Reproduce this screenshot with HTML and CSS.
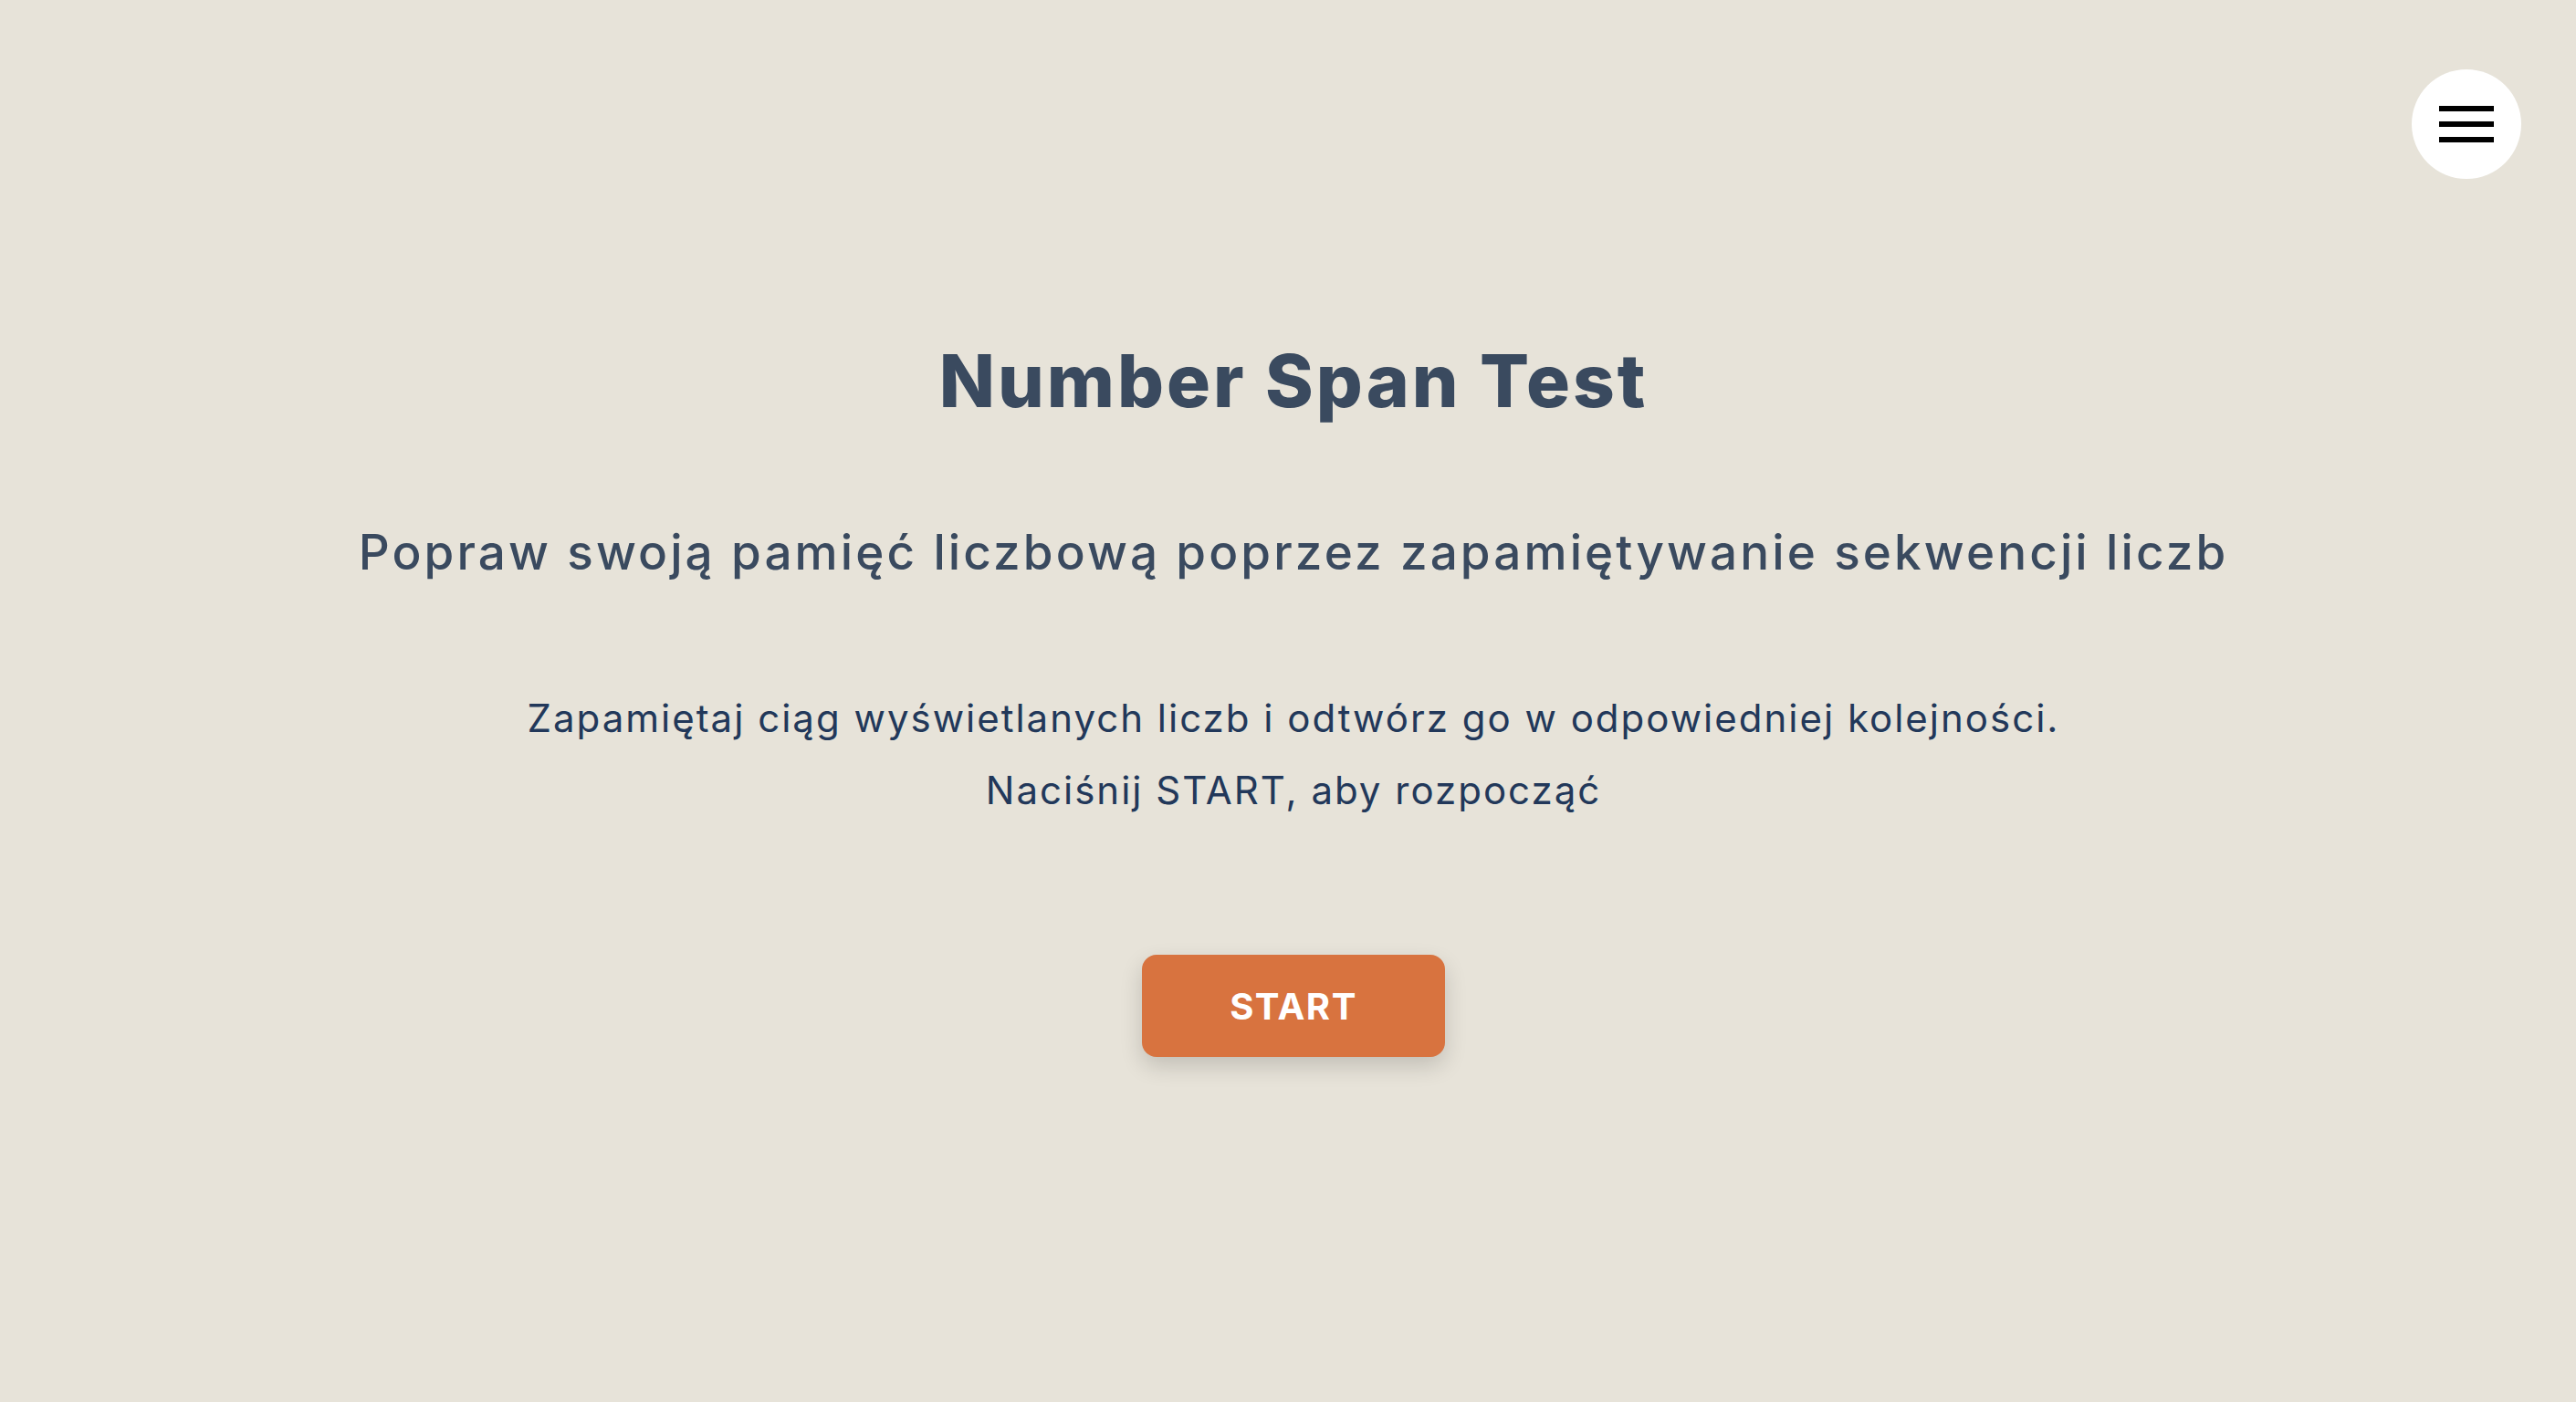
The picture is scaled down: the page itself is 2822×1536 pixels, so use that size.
FILE: index.html
```html
<!DOCTYPE html>
<html lang="pl">
<head>
<meta charset="utf-8">
<title>Number Span Test</title>
<link rel="stylesheet" href="styles.css">
</head>
<body>
<button class="menu-btn" aria-label="Menu">
  <svg class="menu-icon" width="60" height="40" viewBox="0 0 60 40">
    <rect x="0" y="0" width="60" height="6" fill="#000"/>
    <rect x="0" y="17" width="60" height="6" fill="#000"/>
    <rect x="0" y="34" width="60" height="6" fill="#000"/>
  </svg>
</button>
<main class="intro">
  <h1 class="title">Number Span Test</h1>
  <h2 class="subtitle">Popraw swoją pamięć liczbową poprzez zapamiętywanie sekwencji liczb</h2>
  <p class="desc">Zapamiętaj ciąg wyświetlanych liczb i odtwórz go w odpowiedniej kolejności.<br>Naciśnij START, aby rozpocząć</p>
  <button class="start-btn">START</button>
</main>
</body>
</html>
```
FILE: styles.css
```css
html, body {
  margin: 0;
  padding: 0;
}
body {
  background: #e7e3d9;
  min-height: 1536px;
  font-family: Inter, "Noto Sans", sans-serif;
}
.menu-btn {
  position: fixed;
  top: 76px;
  right: 60px;
  width: 120px;
  height: 120px;
  border-radius: 50%;
  border: none;
  background: #ffffff;
  display: flex;
  align-items: center;
  justify-content: center;
  padding: 0;
}
.intro {
  display: flex;
  flex-direction: column;
  align-items: center;
  padding-top: 377px;
  padding-left: 12px;
  text-align: center;
}
.title {
  margin: 0;
  font-size: 80px;
  line-height: 80px;
  font-weight: 800;
  letter-spacing: 3px;
  color: #3a4a5f;
}
.subtitle {
  margin: 122px 0 0;
  font-size: 53px;
  line-height: 53px;
  font-weight: 500;
  letter-spacing: 3.1px;
  color: #3a4a5f;
}
.desc {
  margin: 115px 0 0;
  font-size: 42px;
  line-height: 79px;
  font-weight: 400;
  letter-spacing: 2px;
  color: #22385a;
}
.start-btn {
  margin-top: 141px;
  width: 332px;
  height: 112px;
  border: none;
  border-radius: 16px;
  background: #d8733f;
  color: #ffffff;
  font-family: Inter, "Noto Sans", sans-serif;
  font-size: 40px;
  font-weight: 700;
  letter-spacing: 1.5px;
  box-shadow: 0 10px 24px rgba(0, 0, 0, 0.16);
}
```
